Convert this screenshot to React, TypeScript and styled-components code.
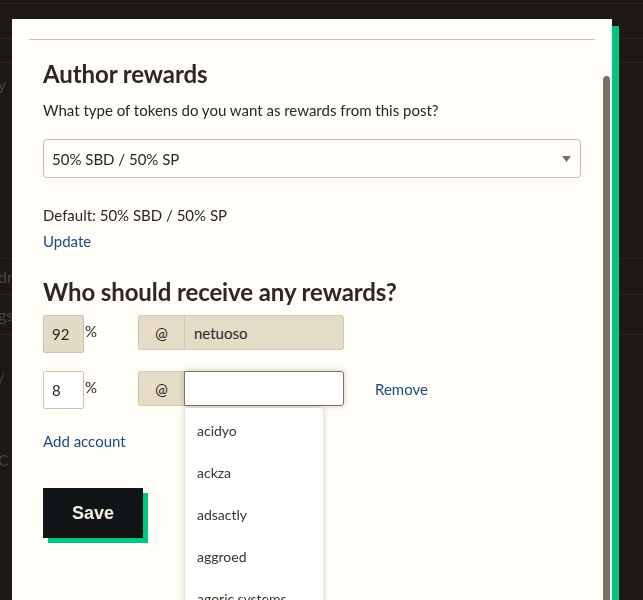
import React from 'react';
import styled, { createGlobalStyle } from 'styled-components';

const GlobalStyle = createGlobalStyle`
  html, body {
    margin: 0;
    padding: 0;
    height: 100%;
    overflow: hidden;
    background: #1b1815;
    font-family: Lato, "Liberation Sans", sans-serif;
  }
`;

const Backdrop = styled.div`
  position: fixed;
  inset: 0;
  display: flex;
  flex-direction: column;
  color: #4b443d;
  font-size: 16px;
`;

const BackRow = styled.div<{ $h: number }>`
  height: ${(p) => p.$h}px;
  border-bottom: 1px solid #2b2622;
  box-sizing: border-box;
`;

const BackText = styled.div<{ $h: number }>`
  height: ${(p) => p.$h}px;
  display: flex;
  align-items: center;
  margin-left: -2px;
`;

const Modal = styled.div`
  position: absolute;
  top: 19px;
  left: 12px;
  width: 600px;
  height: 720px;
  background: #fefdf7;
  box-shadow: 7px 7px 0 #00c683;
  padding: 20px 31px 0;
  box-sizing: border-box;
  color: #2c2722;
`;

const Thumb = styled.div`
  position: absolute;
  top: 57px;
  right: 2px;
  bottom: 0;
  width: 7px;
  border-radius: 4px 4px 0 0;
  background: #7b7066;
`;

const Divider = styled.hr`
  margin: 0 -14px 0 -14px;
  border: none;
  border-top: 1px solid #c9c1b2;
`;

const Heading = styled.h3<{ $top: number }>`
  margin: ${(p) => p.$top}px 0 0;
  font-size: 24px;
  line-height: 30px;
  font-weight: 700;
  color: #2d2823;
  letter-spacing: -0.1px;
`;

const Text = styled.p`
  margin: 10px 0 0;
  font-size: 15px;
  line-height: 22px;
`;

const SelectBox = styled.div`
  margin-top: 18px;
  height: 39px;
  box-sizing: border-box;
  border: 1px solid #c7bea7;
  border-radius: 4px;
  display: flex;
  align-items: center;
  justify-content: space-between;
  padding: 0 9px 0 8px;
  font-size: 15px;
`;

const Defaults = styled.div`
  margin-top: 24px;
  font-size: 15px;
  line-height: 26px;
`;

const Link = styled.a`
  color: #1d4c7c;
  text-decoration: none;
  font-size: 15px;
  cursor: pointer;
`;

const BeneficiaryList = styled.div`
  margin-top: 8px;
  display: flex;
  flex-direction: column;
  gap: 18px;
`;

const Row = styled.div`
  display: flex;
  align-items: flex-start;
`;

const PercentCell = styled.div`
  width: 95px;
  display: flex;
  align-items: flex-start;
`;

const PercentInput = styled.div<{ $disabled?: boolean }>`
  width: 41px;
  height: 38px;
  box-sizing: border-box;
  border: 1px solid #cdc3ab;
  border-radius: 2px;
  background: ${(p) => (p.$disabled ? '#e3dbc6' : '#ffffff')};
  padding: 0 8px;
  display: flex;
  align-items: center;
  font-size: 15px;
`;

const PercentSign = styled.span`
  font-size: 15px;
  margin: 7px 0 0 1px;
`;

const AccountGroup = styled.div`
  position: relative;
  display: flex;
  height: 35px;
`;

const AtAddon = styled.div`
  width: 46px;
  box-sizing: border-box;
  border: 1px solid #d3c9b1;
  border-right: none;
  border-radius: 3px 0 0 3px;
  background: #e4dcc7;
  display: flex;
  align-items: center;
  justify-content: center;
  font-size: 15px;
`;

const AccountInput = styled.div<{ $disabled?: boolean; $focus?: boolean }>`
  width: 160px;
  box-sizing: border-box;
  border: 1px solid ${(p) => (p.$focus ? '#7d7163' : '#d3c9b1')};
  border-radius: 0 3px 3px 0;
  background: ${(p) => (p.$disabled ? '#e4dcc7' : '#ffffff')};
  box-shadow: ${(p) => (p.$focus ? '0 0 5px rgba(110, 95, 70, 0.35)' : 'none')};
  padding: 0 9px;
  display: flex;
  align-items: center;
  font-size: 15px;
`;

const RemoveLink = styled(Link)`
  margin: 9px 0 0 31px;
`;

const Suggestions = styled.ul`
  position: absolute;
  top: 37px;
  left: 47px;
  width: 138px;
  margin: 0;
  padding: 1px 0 0;
  list-style: none;
  background: #ffffff;
  border-radius: 3px;
  box-shadow: 0 0 6px rgba(90, 75, 50, 0.3);
  z-index: 2;
`;

const Suggestion = styled.li`
  height: 42px;
  display: flex;
  align-items: center;
  padding-left: 12px;
  font-size: 14px;
  color: #3a332c;
`;

const AddAccount = styled(Link)`
  display: block;
  margin-top: 23px;
`;

const SaveButton = styled.button`
  margin-top: 38px;
  width: 100px;
  height: 50px;
  border: none;
  background: #111518;
  color: #f6f1e3;
  font-family: "Liberation Sans", Arial, sans-serif;
  font-weight: 700;
  font-size: 18px;
  box-shadow: 5px 5px 0 #00c683;
  cursor: pointer;
`;

const suggestions = ['acidyo', 'ackza', 'adsactly', 'aggroed', 'agoric.systems', 'aiqabar'];

export default function App() {
  return (
    <>
      <GlobalStyle />
      <Backdrop>
        <BackRow $h={4} />
        <BackRow $h={35} />
        <BackRow $h={24} />
        <BackText $h={40}>y</BackText>
        <BackRow $h={156} />
        <BackText $h={34}>dr</BackText>
        <BackRow $h={2} />
        <BackText $h={38}>gs</BackText>
        <BackRow $h={2} />
        <BackText $h={84}>/</BackText>
        <BackText $h={80}>C</BackText>
      </Backdrop>

      <Modal>
        <Thumb />
        <Divider />

        <Heading $top={19}>Author rewards</Heading>
        <Text>What type of tokens do you want as rewards from this post?</Text>

        <SelectBox>
          <span>50% SBD / 50% SP</span>
          <svg width="9" height="6" viewBox="0 0 9 6">
            <polygon points="0,0 9,0 4.5,6" fill="#7a6e62" />
          </svg>
        </SelectBox>

        <Defaults>
          <div>Default: 50% SBD / 50% SP</div>
          <Link>Update</Link>
        </Defaults>

        <Heading $top={23}>Who should receive any rewards?</Heading>

        <BeneficiaryList>
          <Row>
            <PercentCell>
              <PercentInput $disabled>92</PercentInput>
              <PercentSign>%</PercentSign>
            </PercentCell>
            <AccountGroup>
              <AtAddon>@</AtAddon>
              <AccountInput $disabled>netuoso</AccountInput>
            </AccountGroup>
          </Row>

          <Row>
            <PercentCell>
              <PercentInput>8</PercentInput>
              <PercentSign>%</PercentSign>
            </PercentCell>
            <AccountGroup>
              <AtAddon>@</AtAddon>
              <AccountInput $focus />
              <Suggestions>
                {suggestions.map((name) => (
                  <Suggestion key={name}>{name}</Suggestion>
                ))}
              </Suggestions>
            </AccountGroup>
            <RemoveLink>Remove</RemoveLink>
          </Row>
        </BeneficiaryList>

        <AddAccount>Add account</AddAccount>

        <SaveButton>Save</SaveButton>
      </Modal>
    </>
  );
}
